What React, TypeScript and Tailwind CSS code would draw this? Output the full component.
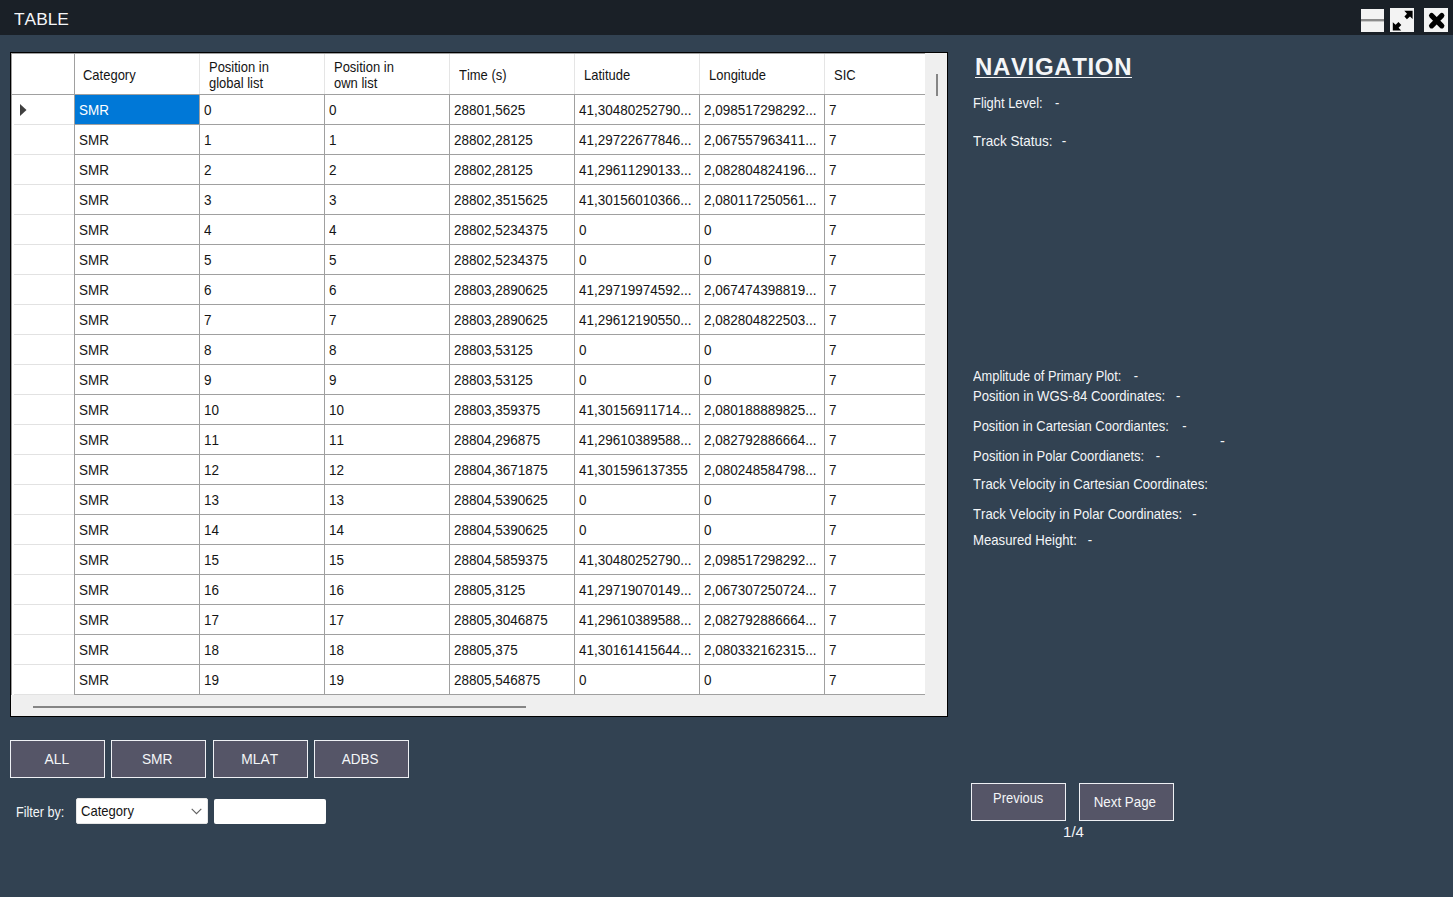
import React from "react";

const headers = ["Category", "Position in\nglobal list", "Position in\nown list", "Time (s)", "Latitude", "Longitude", "SIC"];

const data: [string, string, string][] = [
  ["28801,5625", "41,30480252790...", "2,098517298292..."],
  ["28802,28125", "41,29722677846...", "2,067557963411..."],
  ["28802,28125", "41,29611290133...", "2,082804824196..."],
  ["28802,3515625", "41,30156010366...", "2,080117250561..."],
  ["28802,5234375", "0", "0"],
  ["28802,5234375", "0", "0"],
  ["28803,2890625", "41,29719974592...", "2,067474398819..."],
  ["28803,2890625", "41,29612190550...", "2,082804822503..."],
  ["28803,53125", "0", "0"],
  ["28803,53125", "0", "0"],
  ["28803,359375", "41,30156911714...", "2,080188889825..."],
  ["28804,296875", "41,29610389588...", "2,082792886664..."],
  ["28804,3671875", "41,301596137355", "2,080248584798..."],
  ["28804,5390625", "0", "0"],
  ["28804,5390625", "0", "0"],
  ["28804,5859375", "41,30480252790...", "2,098517298292..."],
  ["28805,3125", "41,29719070149...", "2,067307250724..."],
  ["28805,3046875", "41,29610389588...", "2,082792886664..."],
  ["28805,375", "41,30161415644...", "2,080332162315..."],
  ["28805,546875", "0", "0"],
];

const cols = "grid grid-cols-[63px_125px_125px_125px_125px_125px_125px_101px]";

type LabelProps = { text: string; value?: string; gap?: string; scale?: string; className?: string };

function Label({ text, value = "", gap = "ml-[12px]", scale = "scale-x-[.908]", className = "" }: LabelProps) {
  return (
    <div className={`flex h-5 items-center text-[14.5px] leading-5 ${className}`}>
      <span className={`inline-flex origin-left whitespace-nowrap ${scale}`}>
        {text}
        {value && <span className={gap}>{value}</span>}
      </span>
    </div>
  );
}

function Button({ children, scale = "scale-x-[.89]", className = "" }: { children: React.ReactNode; scale?: string; className?: string }) {
  return (
    <button className={`flex h-[38px] w-[95px] items-center justify-center border border-[#eef0f4] bg-[#555567] leading-5 ${className}`}>
      <span className={`inline-block whitespace-nowrap ${scale}`}>{children}</span>
    </button>
  );
}

function TitleBar() {
  return (
    <header className="flex h-[35px] items-center bg-[#1a2027] pl-[14px] pr-[5px]">
      <h1 className="mt-[4px] origin-left scale-x-[1.02] text-[17px] leading-5">TABLE</h1>
      <div className="ml-auto mt-[4px] flex">
        <svg className="mt-px" width="23" height="23" viewBox="0 0 23 23">
          <rect width="23" height="23" fill="#f3f3f3" />
          <rect y="10" width="23" height="2.4" fill="#8b8b8b" />
        </svg>
        <svg className="ml-[6px]" width="24" height="24" viewBox="0 0 24 24">
          <rect width="24" height="24" fill="#f3f3f3" />
          <path d="M14.3 2.8H22.6V11L20 8.6L16.9 11.2L14.4 8.6L17 5.7Z" fill="#000" />
          <path d="M2.8 14.2V22.4H11.2L8.6 19.8L11.3 17L8.5 14L5.6 16.8Z" fill="#000" />
        </svg>
        <svg className="ml-[10px]" width="24" height="24" viewBox="0 0 24 24">
          <rect width="24" height="24" fill="#f3f3f3" />
          <path d="M7.6 7.6L17.8 17.8M17.8 7.6L7.6 17.8" stroke="#000" strokeWidth="5.2" strokeLinecap="round" />
        </svg>
      </div>
    </header>
  );
}

function Table() {
  return (
    <div className="h-[665px] w-[938px] border border-black bg-[#efefef] text-[#141414]">
      <div className="flex h-[642px]">
        <div className="w-[914px] overflow-hidden border-l border-[#a0a0a0] bg-white">
          <div className={`${cols} h-[42px] border-b border-t border-[#a0a0a0]`}>
            <div className="border-r border-[#a0a0a0]" />
            {headers.map((h, i) => (
              <div key={h} className={`flex items-center pt-px ${i === 0 ? "pl-[8px]" : "pl-[9px]"} ${i < 6 ? "border-r border-[#e5e5e5]" : ""}`}>
                <span className="origin-left scale-x-[.895] whitespace-pre text-[14.5px] leading-[16px]">{h}</span>
              </div>
            ))}
          </div>
          {data.map((r, i) => (
            <div key={i} className={`${cols} h-[30px] text-[15.5px] leading-[29px]`}>
              <div className="flex border-r border-r-[#a0a0a0]">
                <div className="ml-[2px] flex flex-1 items-center border-b border-[#e2e2e2] pl-[6px]">
                  {i === 0 && (
                    <svg width="7" height="12" viewBox="0 0 7 12">
                      <path d="M0 0L6.5 6L0 12Z" fill="#404040" />
                    </svg>
                  )}
                </div>
              </div>
              {["SMR", String(i), String(i), ...r, "7"].map((c, j) => (
                <div
                  key={j}
                  className={`border-b border-[#a0a0a0] pl-[4px] ${j < 6 ? "border-r" : ""} ${i === 0 && j === 0 ? "bg-[#0078d7] text-white" : ""}`}
                >
                  <span className="inline-block origin-left scale-x-[.87] whitespace-nowrap">{c}</span>
                </div>
              ))}
            </div>
          ))}
        </div>
        <div className="flex flex-1 pl-[11px] pt-[21px]">
          <div className="h-[22px] w-[2px] bg-[#858585]" />
        </div>
      </div>
      <div className="ml-[22px] mt-[11px] h-[2px] w-[493px] bg-[#858585]" />
    </div>
  );
}

export default function App() {
  return (
    <div className="h-[897px] w-[1453px] overflow-hidden bg-[#324252] font-['Liberation_Sans',Arial,sans-serif] text-[#f4f6f8] [font-kerning:none]">
      <TitleBar />
      <main className="flex pl-[10px] pt-[17px]">
        <section className="w-[938px]">
          <Table />
          <div className="mt-[23px] flex gap-[6.4px] text-[15.5px]">
            <Button className="pr-[2px]">ALL</Button>
            <Button className="pr-[3px]">SMR</Button>
            <Button className="pr-[2px]">MLAT</Button>
            <Button className="pr-[3px]" scale="scale-x-[.87]">ADBS</Button>
          </div>
          <div className="mt-[19px] flex items-start">
            <span className="ml-[6px] mt-[5px] w-[60px] origin-left scale-x-[.87] whitespace-nowrap text-[14.5px] leading-5">Filter by:</span>
            <div className="mt-px flex h-[26px] w-[132px] items-center justify-between rounded-[2px] border border-[#e6e6e6] bg-white pl-[4px] pr-[5px] text-[#141414]">
              <span className="origin-left scale-x-[.9] text-[14.5px] leading-5">Category</span>
              <svg width="11" height="7" viewBox="0 0 11 7">
                <path d="M.7 .8L5.5 5.6L10.3 .8" fill="none" stroke="#606060" strokeWidth="1.1" />
              </svg>
            </div>
            <div className="ml-[6px] mt-[2px] h-[25px] w-[112px] rounded-[2px] bg-white" />
          </div>
        </section>
        <section className="ml-[25px]">
          <h2 className="ml-[2px] h-[30px] text-[24px] font-bold leading-[29px] tracking-[0.65px]">
            <span className="inline-block h-[26px] w-[157px] whitespace-nowrap border-b-[1.5px] border-[#f4f6f8]">NAVIGATION</span>
          </h2>
          <Label className="mt-[11px]" text="Flight Level:" value="-" gap="ml-[14px]" scale="scale-x-[.89]" />
          <Label className="mt-[18px]" text="Track Status:" value="-" gap="ml-[10px]" scale="scale-x-[.93]" />
          <Label className="mt-[215px]" text="Amplitude of Primary Plot:" value="-" gap="ml-[14px]" scale="scale-x-[.885]" />
          <Label text="Position in WGS-84 Coordinates:" value="-" gap="ml-[12px]" scale="scale-x-[.903]" />
          <Label className="mt-[10px]" text="Position in Cartesian Coordiantes:" value="-" gap="ml-[15px]" scale="scale-x-[.893]" />
          <div className="-mb-[15px] ml-[247px] h-[15px] text-[14.5px] leading-[10px]">-</div>
          <Label className="mt-[10px]" text="Position in Polar Coordianets:" value="-" gap="ml-[13px]" scale="scale-x-[.896]" />
          <Label className="mt-[8px]" text="Track Velocity in Cartesian Coordinates:" />
          <Label className="mt-[10px]" text="Track Velocity in Polar Coordinates:" value="-" gap="ml-[11px]" />
          <Label className="mt-[6px]" text="Measured Height:" value="-" />
          <div className="-ml-[2px] mt-[233px] flex gap-[13px] text-[14.5px]">
            <Button className="pb-[8px]">Previous</Button>
            <Button className="pb-px pr-[3px]" scale="scale-x-[.92]">Next Page</Button>
          </div>
          <div className="w-[201px] text-center text-[15px] leading-[21px]">1/4</div>
        </section>
      </main>
    </div>
  );
}
